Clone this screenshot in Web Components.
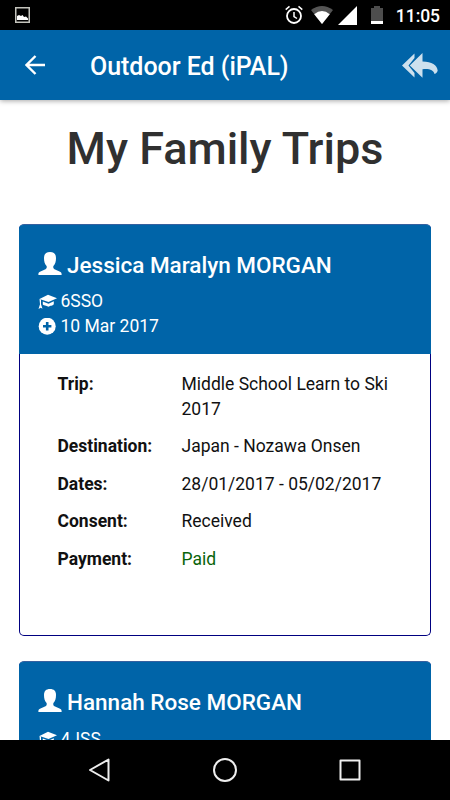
<!DOCTYPE html>
<html lang="en">
<head>
<meta charset="utf-8">
<title>My Family Trips</title>
<style>
    body {
        margin: 0;
        width: 450px;
        height: 800px;
        overflow: hidden;
        background: #fff;
        color: #111;
        font: 17.5px/25px Roboto, sans-serif;
        display: flex;
        flex-direction: column;
    }
</style>
</head>
<body>
<status-bar time="11:05"></status-bar>
<app-header>Outdoor Ed (iPAL)</app-header>
<trip-page heading="My Family Trips">
    <trip-card name="Jessica Maralyn MORGAN" group="6SSO" added="10 Mar 2017">
        <trip-field label="Trip:">Middle School Learn to Ski 2017</trip-field>
        <trip-field label="Destination:">Japan - Nozawa Onsen</trip-field>
        <trip-field label="Dates:">28/01/2017 - 05/02/2017</trip-field>
        <trip-field label="Consent:">Received</trip-field>
        <trip-field label="Payment:" paid>Paid</trip-field>
    </trip-card>
    <trip-card name="Hannah Rose MORGAN" group="4JSS"></trip-card>
</trip-page>
<nav-bar></nav-bar>

<script>
function define(name, getMarkup) {
    customElements.define(name, class extends HTMLElement {
        constructor() {
            super()
            this.attachShadow({ mode: 'open' })
        }

        connectedCallback() {
            this.shadowRoot.innerHTML = getMarkup(this)
        }
    })
}

define('status-bar', el => `
<style>
    :host {
        box-sizing: border-box;
        flex: none;
        height: 30px;
        padding: 0 10px 0 15px;
        display: flex;
        align-items: center;
        background: #000;
        color: #fff;
    }
    svg { display: block; }
    .alarm { margin-left: auto; }
    .wifi { margin-left: 8px; }
    .signal { margin-left: 5px; }
    .battery { margin-left: 14px; }
    time {
        margin-left: 13px;
        font-size: 17.5px;
        font-weight: 500;
        line-height: 30px;
        padding-top: 1px;
        letter-spacing: -.05px;
    }
</style>
<svg width="15" height="16" viewBox="0 0 15 16">
    <path d="M.75.75h13.5v14.5H.75z" fill="none" stroke="#c4c4bd" stroke-width="1.5"/>
    <path d="M2 13V9l2-1 2 1 1.5-1L9 10l2-.5 2 2V13z" fill="#fff"/>
</svg>
<svg class="alarm" width="18" height="20" viewBox="0 0 18 20" fill="none" stroke="#fff">
    <circle cx="9" cy="11" r="7" stroke-width="1.8"/>
    <path d="M9 7v4.5l3 2M.7 4.6 4.5 1.4M17.300 4.600l-3.800-3.200" stroke-width="1.500"/>
</svg>
<svg class="wifi" width="22" height="18" viewBox="0 0 22 18">
    <path d="M0 4Q11-4 22 4L11 18z" fill="#555"/>
    <path d="M3.200 8.200Q11 2 18.800 8.200L11 18z" fill="#fff"/>
</svg>
<svg class="signal" width="19" height="19" viewBox="0 0 19 19">
    <path d="M19 0v19H0z" fill="#fff"/>
</svg>
<svg class="battery" width="12" height="18" viewBox="0 0 12 18">
    <path d="M3 0h6v2h3v16H0V2h3z" fill="#4d4d4d"/>
    <path d="M0 15h12v3H0z" fill="#fff"/>
</svg>
<time>${el.getAttribute('time')}</time>
`)

define('app-header', () => `
<style>
    :host {
        box-sizing: border-box;
        position: relative;
        z-index: 1;
        flex: none;
        height: 70px;
        padding: 0 12px 0 25px;
        display: flex;
        align-items: center;
        background: #0064a8;
        color: #fff;
        box-shadow: 0 1px 5px rgba(0, 0, 0, .35);
    }
    svg { display: block; }
    h1 {
        margin: 4px 0 0 45px;
        font-size: 25px;
        font-weight: 500;
        line-height: 30px;
        letter-spacing: -.03px;
        white-space: nowrap;
    }
    .reply { margin-left: auto; }
</style>
<svg width="20" height="20" viewBox="0 0 20 20">
    <path d="M20 10H2M10.500 1 1.500 10l9 9" fill="none" stroke="#fff" stroke-width="2.400"/>
</svg>
<h1><slot></slot></h1>
<svg class="reply" width="36" height="25" viewBox="0 0 36 25" fill="#cce0ee">
    <path d="M12.500.5V5L6.500 12.500l6 7.500v4.500L0 12.500z"/>
    <path d="M20.500 0v8.500C30 8.500 35 12 35.700 17.500c-.5 2-1.500 3-3.200 3.500-1-4-5-5.500-12-4.800v8.500L7.800 12.500z"/>
</svg>
`)

define('trip-page', el => `
<style>
    :host {
        flex: 1;
        min-height: 0;
        overflow: hidden;
        padding: 0 19px;
    }
    h2 {
        margin: 24px 0 50px;
        font-size: 45px;
        font-weight: 500;
        line-height: 49.500px;
        color: #303030;
        text-align: center;
        white-space: nowrap;
    }
</style>
<h2>${el.getAttribute('heading')}</h2>
<slot></slot>
`)

define('trip-card', el => {
    const added = el.getAttribute('added')
    return `
<style>
    :host {
        box-sizing: border-box;
        display: block;
        height: 412.500px;
        margin-bottom: 25px;
        border: 1px solid #000080;
        border-top-color: #35609f;
        border-radius: 5px;
        background: #fff;
    }
    header {
        box-sizing: border-box;
        height: 129px;
        margin: 0 -1px;
        padding: 28px 19px 0;
        border-radius: 4px 4px 0 0;
        background: #0064a8;
        color: #fff;
    }
    h3 {
        margin: 0 0 11.500px;
        display: flex;
        gap: 5px;
        font-size: 22.500px;
        font-weight: 500;
        line-height: 25px;
        white-space: nowrap;
    }
    h3 svg { margin-top: -1px; }
    p {
        margin: 0;
        display: flex;
        align-items: center;
        line-height: 25px;
    }
    p svg {
        width: 22.500px;
        flex: none;
    }
    .fields {
        padding: 18px 37.500px 0;
    }
</style>
<header>
    <h3>
        <svg width="24" height="24" viewBox="0 0 24 24" fill="#fff">
            <path d="M12 0C8 0 6 2 6 6c0 3.500.8 6.500 2.600 8 .4 1.500 0 2.700-1.100 3.200L2.500 19.500C1 20.200.4 20.800.4 22v1h23.200v-1c0-1.200-.6-1.800-2.100-2.500l-5-2.300c-1.100-.5-1.500-1.700-1.100-3.200C17.200 12.500 18 9.500 18 6c0-4-2-6-6-6z"/>
        </svg>
        <span>${el.getAttribute('name')}</span>
    </h3>
    <p>
        <svg height="16" viewBox="0 0 22.500 16" fill="#fff">
            <path d="M10 .8 19 4.200 10.500 8 1.500 5z"/>
            <path d="M4.800 7.500 10.500 9.700l5.300-2.500v3c-1 1-2.300 1.500-3.300 1.500l-2 1-2.500-1c-1.500-.1-2.500-.5-3.200-1.200z"/>
            <path d="M1.500 5 3 5.500v4.800l1.500 4.500-1.800-1L.5 15 2 10.300z"/>
        </svg>
        <span>${el.getAttribute('group')}</span>
    </p>
    ${added ? `<p>
        <svg height="18" viewBox="0 0 22.500 18">
            <circle cx="9.200" cy="8.200" r="8.500" fill="#fff"/>
            <path d="M9.200 4v8.400M5 8.200h8.400" stroke="#0064a8" stroke-width="2.600"/>
        </svg>
        <span>${added}</span>
    </p>` : ''}
</header>
<div class="fields"><slot></slot></div>
`
})

define('trip-field', el => `
<style>
    :host {
        display: grid;
        grid-template-columns: 124px 1fr;
        margin-bottom: 12.500px;
    }
    b { font-weight: 700; }
    :host([paid]) span { color: #0a640a; }
</style>
<b>${el.getAttribute('label')}</b>
<span><slot></slot></span>
`)

define('nav-bar', () => `
<style>
    :host {
        position: relative;
        z-index: 1;
        flex: none;
        height: 60px;
        display: flex;
        justify-content: center;
        align-items: center;
        gap: 101px;
        background: #000;
    }
    svg {
        display: block;
        fill: none;
        stroke: #eee;
        stroke-width: 2;
        stroke-linejoin: round;
    }
</style>
<svg width="24" height="24" viewBox="0 0 24 24"><path d="M20.500 1.500v21L2 12z"/></svg>
<svg width="24" height="24" viewBox="0 0 24 24"><circle cx="12" cy="12" r="11"/></svg>
<svg width="24" height="24" viewBox="0 0 24 24"><path d="M2.500 2.500h19v19h-19z"/></svg>
`)
</script>
</body>
</html>
